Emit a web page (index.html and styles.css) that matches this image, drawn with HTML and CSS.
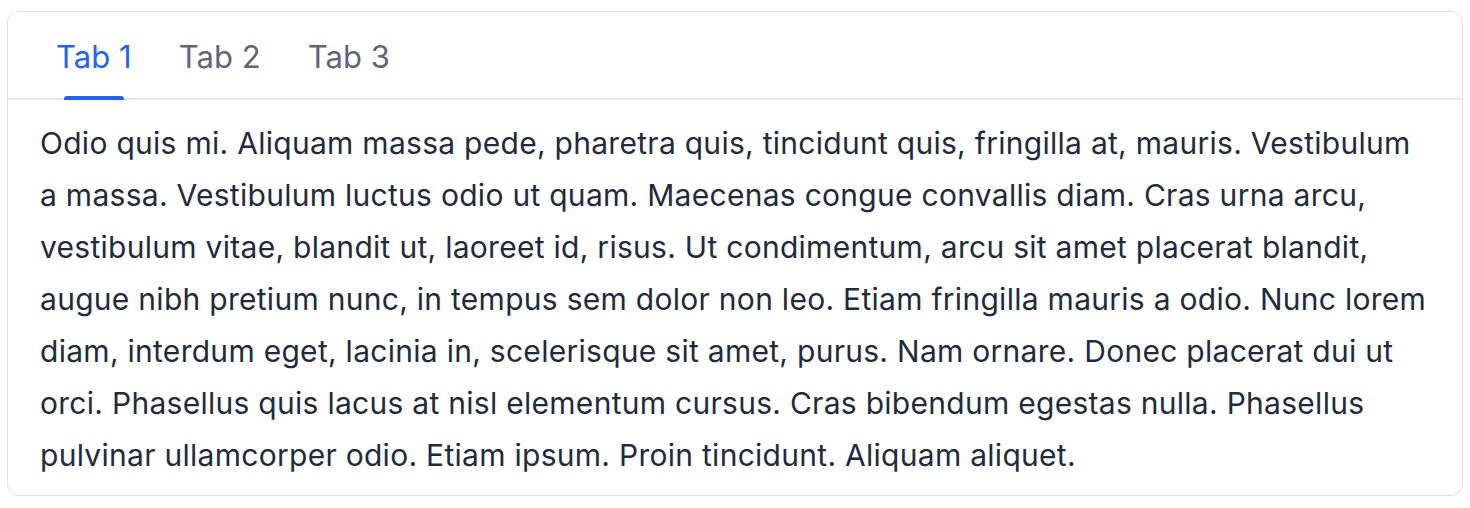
FILE: index.html
```html
<!DOCTYPE html>
<html lang="en">
<head>
<meta charset="utf-8">
<title>Tabs</title>
<link rel="stylesheet" href="styles.css">
</head>
<body>
<div class="card">
  <div class="tablist" role="tablist">
    <button class="tab active" role="tab">Tab 1</button>
    <button class="tab" role="tab">Tab 2</button>
    <button class="tab" role="tab">Tab 3</button>
  </div>
  <div class="panel" role="tabpanel">
    <p>Odio quis mi. Aliquam massa pede, pharetra quis, tincidunt quis, fringilla at, mauris. Vestibulum a massa. Vestibulum luctus odio ut quam. Maecenas congue convallis diam. Cras urna arcu, vestibulum vitae, blandit ut, laoreet id, risus. Ut condimentum, arcu sit amet placerat blandit, augue nibh pretium nunc, in tempus sem dolor non leo. Etiam fringilla mauris a odio. Nunc lorem diam, interdum eget, lacinia in, scelerisque sit amet, purus. Nam ornare. Donec placerat dui ut orci. Phasellus quis lacus at nisl elementum cursus. Cras bibendum egestas nulla. Phasellus pulvinar ullamcorper odio. Etiam ipsum. Proin tincidunt. Aliquam aliquet.</p>
  </div>
</div>
</body>
</html>
```
FILE: styles.css
```css
* { box-sizing: border-box; }
html, body { margin: 0; background: #ffffff; }
body {
  padding: 11px 7px 0 7px;
  font-family: Inter, "Noto Sans", sans-serif;
}
.card {
  width: 1456px;
  height: 485px;
  border: 1px solid #dfe2e7;
  border-radius: 12px;
  background: #fff;
  overflow: hidden;
}
.tablist {
  display: flex;
  gap: 47px;
  padding-left: 48px;
  height: 88px;
  border-bottom: 2px solid #e5e7eb;
}
.tab {
  position: relative;
  border: 0;
  background: none;
  padding: 2px 0 0 0;
  margin: 0;
  font-family: inherit;
  font-size: 31px;
  letter-spacing: 0.05px;
  color: #5e6677;
  cursor: pointer;
}
.tab.active { color: #2563eb; }
.tab.active::after {
  content: "";
  position: absolute;
  left: 8px;
  right: 8px;
  bottom: -2px;
  height: 4px;
  border-radius: 3px 3px 0 0;
  background: #2563eb;
}
.panel {
  padding: 17px 34px 14px 32px;
}
.panel p {
  margin: 0;
  font-size: 30px;
  letter-spacing: 0.28px;
  line-height: 52px;
  color: #222b3b;
}
```
